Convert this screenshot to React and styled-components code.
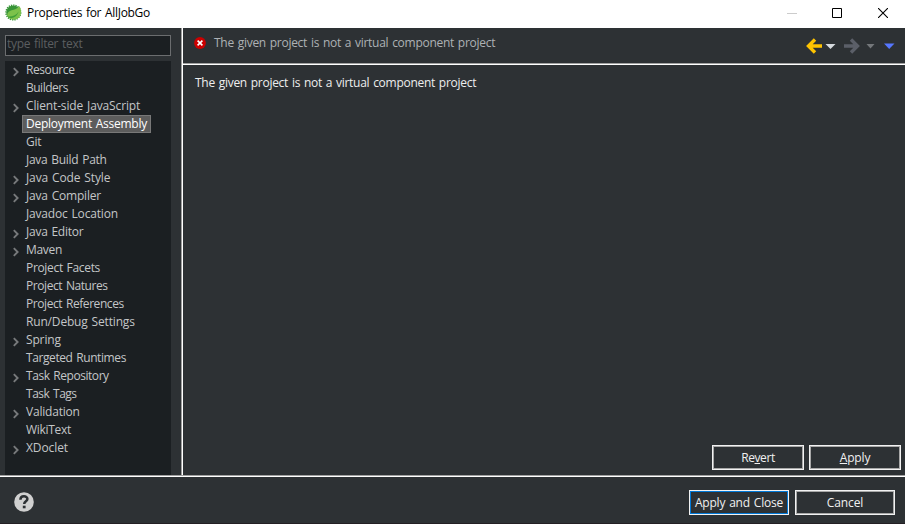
import React from 'react';
import styled, { createGlobalStyle, css } from 'styled-components';

const Global = createGlobalStyle`
  * { box-sizing: border-box; }
  body {
    margin: 0;
    overflow: hidden;
    font-family: "Open Sans", "Noto Sans", "Noto Sans CJK KR", sans-serif;
    font-size: 12px;
    line-height: 18px;
    word-spacing: 1px;
  }
`;

const Window = styled.div`
  display: flex;
  flex-direction: column;
  width: 905px;
  height: 524px;
  background: #2d3134;
  color: #eeeeee;
  border-bottom: 1px solid #231f23;
`;

const TitleBar = styled.header`
  display: flex;
  align-items: center;
  height: 28px;
  margin-right: -1px;
  padding-left: 5px;
  background: #ffffff;
  color: #000000;
`;

const AppIcon = styled.svg`
  margin-bottom: 3px;
`;

const Title = styled.h1`
  flex: 1;
  margin: 0 0 3px 5px;
  font-size: 12px;
  font-weight: 400;
  letter-spacing: -0.3px;
`;

const CaptionButton = styled.button`
  display: flex;
  align-items: center;
  justify-content: center;
  width: ${p => (p.$disabled ? 44 : 46)}px;
  height: 25px;
  margin-bottom: 3px;
  padding: 0;
  border: 0;
  background: transparent;
  color: ${p => (p.$disabled ? '#cccccc' : '#000000')};
`;

const Body = styled.div`
  display: flex;
  height: 447px;
`;

const Sidebar = styled.aside`
  display: flex;
  flex-direction: column;
  gap: 5px;
  width: 181px;
  padding: 7px 10px 0 5px;
`;

const FilterInput = styled.input`
  width: 166px;
  height: 21px;
  padding: 0 0 4px 1px;
  border: 1px solid #6b6d6f;
  border-radius: 0;
  outline: 0;
  background: #1b1f22;
  font: inherit;
  letter-spacing: -0.3px;
  word-spacing: 1px;
  color: #aaaaaa;
  &::placeholder { color: #5c5e60; opacity: 1; }
`;

const Tree = styled.ul`
  flex: 1;
  margin: 0;
  padding: 0;
  list-style: none;
  background: #1b1f22;
`;

const TreeRow = styled.li`
  display: flex;
  height: 18px;
`;

const Twisty = styled.span`
  display: flex;
  width: 17px;
  padding: 6px 0 0 8px;
  color: #77797b;
`;

const TreeLabel = styled.span`
  height: 18px;
  padding: 0 3px;
  border: 1px solid transparent;
  line-height: 15px;
  white-space: nowrap;
  color: #c4c6c8;
  letter-spacing: ${p => p.$spacing || 0}px;
  ${p => p.$selected && css`
    border-color: #787878;
    background: #5c5c5c;
    color: #ffffff;
  `}
`;

const VerticalSash = styled.div`
  width: 2px;
  border-left: 1px solid #a0a0a0;
  background: #ffffff;
`;

const HorizontalSash = styled.div`
  flex: none;
  height: 2px;
  border-top: 1px solid #a0a0a0;
  background: #ffffff;
`;

const Page = styled.main`
  display: flex;
  flex: 1;
  flex-direction: column;
`;

const PageHeader = styled.div`
  display: flex;
  height: 35px;
  padding: 0 10px 0 11px;
`;

const Message = styled.div`
  display: flex;
  flex: 1;
  gap: 8px;
  padding-top: 6px;
  color: #aeb1b4;
  letter-spacing: -0.28px;
  svg { margin-top: 3px; }
`;

const NavToolbar = styled.div`
  display: flex;
  padding-top: 9px;
`;

const PageContent = styled.p`
  flex: 1;
  margin: 0;
  padding: 9px 12px;
  letter-spacing: -0.28px;
`;

const ButtonRow = styled.div`
  display: flex;
  justify-content: flex-end;
  gap: 5px;
  padding: 0 4px 5px;
`;

const PushButton = styled.button`
  width: ${p => p.$width}px;
  height: 25px;
  padding: 0;
  border: 1px solid #f2f2f2;
  border-radius: 0;
  outline: 1px solid ${p => (p.$primary ? '#0078d7' : '#a8a8a8')};
  outline-offset: -2px;
  background: #2d3134;
  color: #f0f0f0;
  font: inherit;
  line-height: 21px;
  word-spacing: 1px;
  letter-spacing: ${p => p.$spacing || 0}px;
`;

const Footer = styled.footer`
  display: flex;
  flex: 1;
  align-items: flex-start;
  gap: 6px;
  padding: 13px 10px 0 14px;
`;

const HelpButton = styled.button`
  display: flex;
  margin: 2px auto 0 0;
  padding: 0;
  border: 0;
  background: transparent;
`;

const items = [
  { name: 'Resource', expandable: true, spacing: -0.42 },
  { name: 'Builders', spacing: -0.5 },
  { name: 'Client-side JavaScript', expandable: true, spacing: -0.14 },
  { name: 'Deployment Assembly', spacing: -0.26 },
  { name: 'Git', spacing: -0.2 },
  { name: 'Java Build Path', spacing: -0.28 },
  { name: 'Java Code Style', expandable: true, spacing: -0.13 },
  { name: 'Java Compiler', expandable: true, spacing: -0.2 },
  { name: 'Javadoc Location', spacing: -0.18 },
  { name: 'Java Editor', expandable: true, spacing: -0.25 },
  { name: 'Maven', expandable: true, spacing: -0.3 },
  { name: 'Project Facets', spacing: -0.33 },
  { name: 'Project Natures', spacing: -0.42 },
  { name: 'Project References', spacing: -0.42 },
  { name: 'Run/Debug Settings', spacing: -0.17 },
  { name: 'Spring', expandable: true, spacing: -0.15 },
  { name: 'Targeted Runtimes', spacing: -0.41 },
  { name: 'Task Repository', expandable: true, spacing: -0.44 },
  { name: 'Task Tags', spacing: -0.48 },
  { name: 'Validation', expandable: true, spacing: -0.2 },
  { name: 'WikiText', spacing: -0.3 },
  { name: 'XDoclet', expandable: true, spacing: -0.1 },
];

const SpringIcon = () => (
  <AppIcon width="17" height="17" viewBox="0 0 17 17">
    <circle cx="8.3" cy="8.5" r="7" fill="#379437" />
    <circle cx="8.3" cy="8.5" r="7.4" fill="none" stroke="#379437" strokeWidth="1.4" strokeDasharray="1.3 1" />
    <path d="M2.2 11.5C2.2 4.6 10 7.4 14.7 2.2c2.7 5.6 1.6 11.6-3.9 13.1-4 .9-7.4-.9-8.6-3.8z" fill="#7cc24a" />
    <path d="M2.4 12.4c4.8.6 9-1.2 11.2-5-1 4.5-5.6 7.6-10.2 6.2z" fill="#3f9f38" />
  </AppIcon>
);

const Chevron = () => (
  <svg width="7" height="10" viewBox="0 0 7 10">
    <path d="M.8 1.2L4.6 5L.8 8.8" fill="none" stroke="currentColor" strokeWidth="1.9" />
  </svg>
);

const ErrorIcon = () => (
  <svg width="12" height="12" viewBox="0 0 12 12">
    <circle cx="6" cy="6" r="5.9" fill="#cc0000" />
    <path d="M3.6 3.6l4.8 4.8M8.4 3.6L3.6 8.4" stroke="#fff" strokeWidth="1.6" />
  </svg>
);

const NavIcons = () => (
  <svg width="90" height="18" viewBox="0 0 90 18">
    <path d="M17 9H4M10 2.5L3.5 9l6.5 6.5" fill="none" stroke="#ffc400" strokeWidth="3.4" />
    <path d="M20.5 7h10l-5 5z" fill="#d6dade" />
    <path d="M39 9h13M46 2.5L52.5 9 46 15.5" fill="none" stroke="#5b5f68" strokeWidth="3.4" />
    <path d="M61.5 7h8l-4 4.5z" fill="#74777a" />
    <path d="M79 6.5h10.5l-5.3 5.5z" fill="#5677ff" />
  </svg>
);

const HelpIcon = () => (
  <svg width="20" height="20" viewBox="0 0 20 20">
    <circle cx="10" cy="10" r="9.8" fill="#d0d0d0" />
    <path d="M6.4 7.7c0-4.4 7-4.3 7-.7 0 2.4-3.2 2.2-3.2 5" fill="none" stroke="#2d3134" strokeWidth="2.5" />
    <path d="M8.8 13.7h2.8v2.6H8.8z" fill="#2d3134" />
  </svg>
);

export default function App() {
  return (
    <>
      <Global />
      <Window>
        <TitleBar>
          <SpringIcon />
          <Title>Properties for AllJobGo</Title>
          <CaptionButton $disabled aria-label="Minimize">
            <svg width="10" height="10"><path d="M0 5.5h10" stroke="currentColor" /></svg>
          </CaptionButton>
          <CaptionButton aria-label="Maximize">
            <svg width="10" height="10"><path d="M.5.5h9v9h-9z" fill="none" stroke="currentColor" /></svg>
          </CaptionButton>
          <CaptionButton aria-label="Close">
            <svg width="10" height="10"><path d="M0 0l10 10M10 0L0 10" stroke="currentColor" strokeWidth="1.1" /></svg>
          </CaptionButton>
        </TitleBar>
        <Body>
          <Sidebar>
            <FilterInput placeholder="type filter text" />
            <Tree>
              {items.map(({ name, expandable, spacing }) => (
                <TreeRow key={name}>
                  <Twisty>{expandable && <Chevron />}</Twisty>
                  <TreeLabel $spacing={spacing} $selected={name === 'Deployment Assembly'}>{name}</TreeLabel>
                </TreeRow>
              ))}
            </Tree>
          </Sidebar>
          <VerticalSash />
          <Page>
            <PageHeader>
              <Message><ErrorIcon />The given project is not a virtual component project</Message>
              <NavToolbar><NavIcons /></NavToolbar>
            </PageHeader>
            <HorizontalSash />
            <PageContent>The given project is not a virtual component project</PageContent>
            <ButtonRow>
              <PushButton $width={92} $spacing={-0.4}>Re<u>v</u>ert</PushButton>
              <PushButton $width={92} $spacing={-0.15}><u>A</u>pply</PushButton>
            </ButtonRow>
          </Page>
        </Body>
        <HorizontalSash />
        <Footer>
          <HelpButton aria-label="Help"><HelpIcon /></HelpButton>
          <PushButton $width={100} $primary $spacing={-0.2}>Apply and Close</PushButton>
          <PushButton $width={100} $spacing={-0.1}>Cancel</PushButton>
        </Footer>
      </Window>
    </>
  );
}
